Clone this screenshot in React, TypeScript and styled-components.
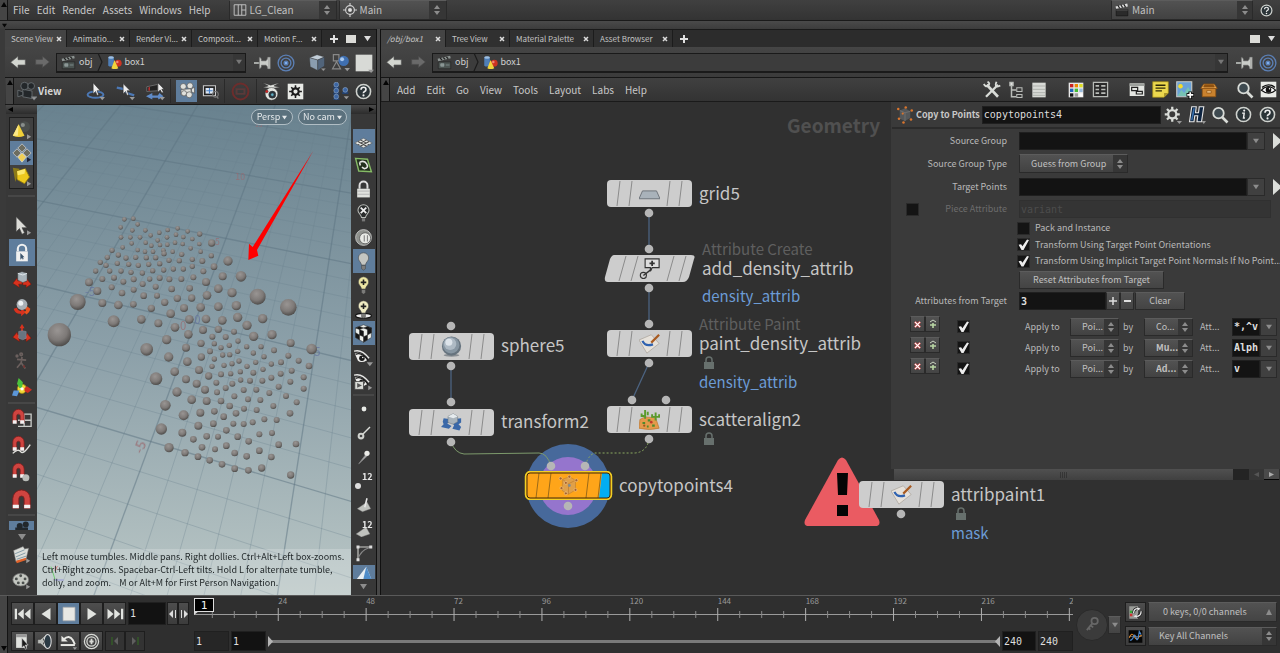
import React from "react";
import styled, { createGlobalStyle, css } from "styled-components";

const SANS = `"Noto Sans CJK SC", "Open Sans", sans-serif`;
const MONO = `"DejaVu Sans Mono", "Liberation Mono", monospace`;

const GlobalStyle = createGlobalStyle`
  *, *::before, *::after { box-sizing: border-box; }
  body { margin: 0; background: #2e2e2e; }
  #root { font-family: ${SANS}; font-size: 10px; line-height: 16px; color: #c4c4c4; }
  button, input, select { font: inherit; color: inherit; margin: 0; padding: 0; border: 0; border-radius: 0; background: none; }
  a { color: inherit; text-decoration: none; }
  svg { display: block; flex: none; }
`;

/* ---------- icons ---------- */

const metal = "#d9dcd8";
const moreTick = <path d="M18 17l5 3-5 3z" fill="#999" />;
const downTick = <path d="M17 19h7l-3.500 4z" fill="#999" />;
const magnet = (
  <g>
    <path d="M2 17V8a6.500 6.500 0 0 1 13 0v9h-4.500V9a2 2 0 0 0-4 0v8z" fill="#cf4440" stroke="#7e1d1b" strokeWidth=".8" />
    <path d="M2 14h4.500v4H2zM10.500 14H15v4h-4.500z" fill="#f2f2f2" />
  </g>
);
const eye = (
  <g>
    <path d="M1 7Q9 3 17 15Q9 20 5 16z" fill="#f0f0ee" />
    <path d="M0 4Q10 1 19 13" fill="none" stroke="#e8e8e6" strokeWidth="1.800" />
    <path d="M2 8Q10 4 18 16" fill="none" stroke="#1a1a1a" strokeWidth="1.600" />
    <circle cx="10" cy="13" r="3.500" fill="#1a1a1a" />
    <circle cx="11" cy="12" r="1" fill="#eee" />
  </g>
);
const redArrows = (
  <g fill="#d8321e" stroke="#7a1408" strokeWidth=".6">
    <path d="M1 16l5-6 1 3h5v4H8l1 4z" />
    <path d="M23 17l-5-6-1 3h-4v4h4v3z" />
  </g>
);
const bulb = (fill: string) => (
  <g>
    <path d="M12 1a6.500 6.500 0 0 0-6.500 6.500c0 4 3.500 5 4 9h5c.5-4 4-5 4-9A6.500 6.500 0 0 0 12 1z" fill={fill} stroke="#444" strokeWidth=".7" />
    <path d="M9.500 17h5v4l-2.500 2-2.500-2z" fill="#7c7c7a" stroke="#333" strokeWidth=".5" />
  </g>
);
const quad = <path d="M3 17L16 8l5 9-11 4z" fill="#bfc1bd" stroke="#777" strokeWidth=".5" />;

const icons: Record<string, React.ReactNode> = {
  layout: (
    <g fill="none" stroke="#c4c4c4" strokeWidth="1.600"><path d="M2 3h20v18H2zM9 3v18M15 3v18M15 12h7" /></g>
  ),
  target: (
    <g fill="none" stroke="#cfcfcf" strokeWidth="2"><circle cx="12" cy="12" r="7.500" /><path d="M12 0v5M12 19v5M0 12h5M19 12h5" /><circle cx="12" cy="12" r="2.500" fill="#eee" /></g>
  ),
  clapper: (
    <g><path d="M2 11h20v11H2z" fill="#4c5452" stroke="#222" /><path d="M1 6l20-5 1 4L2 10z" fill="#8d9492" /><path d="M5 5l3 3M10 4l3 3M15 3l3 3" stroke="#222" strokeWidth="2" /><path d="M6 14h5v4H6zM14 16h6" stroke="#9aa" fill="#8a9290" /></g>
  ),
  clapperDark: (
    <g><path d="M2 11h20v11H2z" fill="#2a2a2a" stroke="#111" /><path d="M2 12h20" stroke="#777" /><path d="M1 6l20-5 1 5L2 10z" fill="#ddd" /><path d="M5 4l3 5M10 3l3 5M15 2l3 5" stroke="#222" strokeWidth="2" /></g>
  ),
  shapes: (
    <g><path d="M2 4q4-3 9 0v13q-5 3-9 0z" fill="#4f7fb8" /><ellipse cx="6.500" cy="4" rx="4.500" ry="2" fill="#9fc0e2" /><circle cx="18" cy="13" r="5.500" fill="#cc3322" /><circle cx="16.500" cy="11" r="2" fill="#ee8877" /><path d="M12 8l6 13q-6 3-11 0z" fill="#f1d43c" /></g>
  ),
  back: (
    <g><path d="M1 11L12 2v5h11v8H12v5z" fill="#d3d6d0" stroke="#555" /></g>
  ),
  forward: <path d="M23 11L12 2v5H1v8h11v5z" fill="#6a6a6a" stroke="#4a4a4a" />,
  pin: (
    <g fill="#c9ccc8"><path d="M0 11h8v2H0z" /><path d="M7 4q4 2 3 5h6q2-1 2-5h4v16h-4q0-4-2-5h-6q1 3-3 5z" stroke="#555" strokeWidth=".8" /><path d="M20 4v16" stroke="#777" strokeWidth=".8" /></g>
  ),
  rings: (
    <g fill="none" stroke="#5b7fb4" strokeWidth="1.800"><circle cx="12" cy="12" r="10.500" /><circle cx="12" cy="12" r="6.500" /><circle cx="12" cy="12" r="2.500" fill="#7fb0ee" /></g>
  ),
  cube: (
    <g stroke="#333" strokeWidth=".5"><path d="M2 5l10-4 10 3-9 4z" fill="#c2ced8" /><path d="M2 5l11 3v14l-10-5z" fill="#8a9daf" /><path d="M13 8l9-4v12l-9 6z" fill="#51647a" />{downTick}</g>
  ),
  shapeSet: (
    <g><path d="M3 2h7v8H3zM2 20l5-9 5 9z" fill="none" stroke="#888" strokeWidth="1.500" /><circle cx="16" cy="10" r="6.500" fill="#3f6fb0" /><circle cx="14" cy="8" r="2.500" fill="#a8c8ee" />{downTick}</g>
  ),
  paper: (
    <g><path d="M2 2h20v20H2z" fill="#d8dad6" /><path d="M17 20h7l-3.500 4z" fill="#999" /></g>
  ),
  camera: (
    <g fill="#23272a" stroke="#6b7175"><path d="M7 10l11 2v9l-11-2z" /><circle cx="9" cy="6" r="4.500" /><circle cx="17" cy="6" r="4" /><path d="M1 11l6 2v4l-6 2z" />{downTick}</g>
  ),
  tumble: (
    <g><ellipse cx="12" cy="16" rx="10" ry="4" fill="none" stroke="#4c78b4" strokeWidth="2.500" /><path d="M9 1v14l3-3 2 5 2-1-2-5h4z" fill="#eee" stroke="#222" strokeWidth=".7" />{downTick}</g>
  ),
  pan: (
    <g><path d="M1 7l9 2 4 5 9 3" fill="none" stroke="#4c78b4" strokeWidth="3" /><path d="M9 2v13l3-3 2 5 2-1-2-5h4z" fill="#eee" stroke="#222" strokeWidth=".7" />{downTick}</g>
  ),
  dolly: (
    <g><path d="M1 6l14-3v8L1 12z" fill="#232323" stroke="#777" /><path d="M3 7l2-1v5H3z" fill="#b33" /><path d="M0 18l8-4v3h7l2-3 5 4-6 4-1-2H8v2z" fill="#5f8bc8" /><path d="M15 1v12l3-3 2 4 2-1-2-4h3z" fill="#eee" stroke="#222" strokeWidth=".7" />{downTick}</g>
  ),
  cameraMulti: (
    <g fill="#dfe0dc" stroke="#555" strokeWidth=".9"><circle cx="7" cy="6" r="4" /><circle cx="16" cy="5" r="4" /><path d="M4 10l13-1 1 7-14 1z" /><circle cx="8" cy="15" r="3.500" /><circle cx="15" cy="17" r="4" /><path d="M18 9l4-2v8l-4-2z" /></g>
  ),
  frame: (
    <g><path d="M2 4h17v14H2z" fill="#222" stroke="#ccc" strokeWidth="1.500" /><path d="M5 7h11v8H5z" fill="#dfe8f4" /><path d="M6 11h9M10.500 7v8" stroke="#4a82c8" strokeWidth="1.500" /><circle cx="19" cy="16" r="4" fill="none" stroke="#777" strokeWidth="1.500" /><path d="M21 19l2 3" stroke="#777" strokeWidth="2" /></g>
  ),
  stop: (
    <g fill="none" stroke="#6d2d2c" strokeWidth="2.500"><circle cx="12" cy="12" r="10" /><path d="M7 9h10v6H7z" stroke="#5a3a3a" /></g>
  ),
  copter: (
    <g stroke="#333" strokeWidth=".6"><path d="M1 1l10 3 11-3-7 4 8 2-11 1-11-1 7-2z" fill="#e2e4e0" /><circle cx="12" cy="15" r="8" fill="#e4e6e2" /><circle cx="13" cy="16" r="4.500" fill="#28333c" /><circle cx="13" cy="16" r="2" fill="#5fb0c8" /><circle cx="6" cy="12" r="1.800" fill="#d22" /></g>
  ),
  gearBox: (
    <g><path d="M1 1h22v22H1z" fill="#e8eae6" /><circle cx="12" cy="12" r="4.500" fill="none" stroke="#1c1c1c" strokeWidth="3" /><path d="M12 3v4M12 17v4M3 12h4M17 12h4M6 6l3 3M15 15l3 3M18 6l-3 3M9 15l-3 3" stroke="#1c1c1c" strokeWidth="2.200" /></g>
  ),
  nodesBlue: (
    <g fill="#3c66a4" stroke="#9cb8dd" strokeWidth=".7"><path d="M3 6h8v3H3zM3 14h8v3H3zM3 22h8v2H3zM15 13h8v3h-8z" stroke="none" fill="#23406e" /><circle cx="7" cy="3.500" r="3.200" /><circle cx="7" cy="11.500" r="3.200" /><circle cx="7" cy="19.500" r="3.200" /><circle cx="19" cy="10.500" r="3.200" /><path d="M17 19h7l-3.500 4z" fill="#999" stroke="none" /></g>
  ),
  help: (
    <g><circle cx="12" cy="12" r="10" fill="#2b3438" stroke="#cfd2ce" strokeWidth="2.200" /><path d="M8.500 9.500q0-3.500 3.500-3.500t3.500 3q0 2-2 3t-1.500 2.500" fill="none" stroke="#eee" strokeWidth="2.300" /><circle cx="12" cy="17.500" r="1.500" fill="#eee" /></g>
  ),
  info: (
    <g><circle cx="12" cy="12" r="10" fill="#2b3438" stroke="#cfd2ce" strokeWidth="2.200" /><path d="M10 10h3l-1 7h2" fill="none" stroke="#eee" strokeWidth="2" /><circle cx="13" cy="6.500" r="1.500" fill="#eee" /></g>
  ),
  wrench: (
    <g fill="none" stroke={metal} strokeWidth="3"><path d="M5 5l15 16" strokeWidth="3.500" /><path d="M20 5L4 21" /><path d="M1 4q3 5 6 2t-1-5M18 1q-2 5 0 6t5-1" strokeWidth="2.500" /></g>
  ),
  tree: (
    <g fill="none" stroke="#b9bcb8" strokeWidth="2"><path d="M6 4v17h6M6 12h6" /><path d="M13 9h7v5h-7zM13 18h7v4h-7z" strokeWidth="1.400" /><path d="M4 2h4v4H4z" fill="#eee" /></g>
  ),
  list: (
    <g><path d="M2 1h20v22H2z" fill="#d8dad6" /><path d="M2 6h20M2 11h20M2 16h20M2 20h20" stroke="#9b9e9a" /></g>
  ),
  palette: (
    <g><path d="M1 1h22v22H1z" fill="#e8e8e8" /><path d="M3 3h5v5H3z" fill="#c22" /><path d="M10 3h5v5h-5z" fill="#e80" /><path d="M17 3h5v5h-5z" fill="#dd2" /><path d="M3 10h5v5H3z" fill="#26b" /><path d="M10 10h5v5h-5z" fill="#4b3" /><path d="M17 10h5v5h-5z" fill="#9bd" /><path d="M3 17h5v5H3z" fill="#111" /><path d="M10 17h5v5h-5z" fill="#999" /><path d="M17 17h5v5h-5z" fill="#fff" /></g>
  ),
  tableGrid: (
    <g><path d="M2 2h20v20H2z" fill="#2a2a2a" stroke="#b9bcb8" strokeWidth="1.800" /><path d="M5 7h5M5 12h5M5 17h5M13 7h6M13 12h6M13 17h6" stroke="#b9bcb8" strokeWidth="2.400" /></g>
  ),
  windows: (
    <g><path d="M1 2h22v19H1z" fill="#e4e6e2" /><path d="M1 2h22v4H1z" fill="#9da09c" /><path d="M4 8h9v5H4zM11 14h9v4h-9z" fill="#e4e6e2" stroke="#222" strokeWidth="1.800" /></g>
  ),
  note: (
    <g><path d="M1 1h22v16l-6 6H1z" fill="#ecd84e" stroke="#a08a18" /><path d="M17 23v-6h6z" fill="#a8942a" /><path d="M5 6h14M5 10h14M5 14h9" stroke="#2c2808" strokeWidth="1.800" /></g>
  ),
  picture: (
    <g><path d="M1 1h20v20H1z" fill="#6aa2d8" stroke="#c8ccc8" strokeWidth="1.500" /><circle cx="6" cy="7" r="3" fill="#f4dc2c" /><path d="M2 20l5-8 4 4 5-8 4 6v6z" fill="#76c2b4" /><path d="M14 18.500h10M19 14v10" stroke="#111" strokeWidth="5" /><path d="M15 18.500h8M19 15v8" stroke="#fff" strokeWidth="2.200" /></g>
  ),
  crate: (
    <g stroke="#8d5212"><path d="M3 10h18v11H3z" fill="#c9822e" /><path d="M5 4h14l4 6H1z" fill="#e2a04c" /><path d="M6 5h12l1 3H5z" fill="#8d5212" /><path d="M9 13h6v3H9z" fill="#f2ca90" /></g>
  ),
  search: (
    <g><path d="M15 15l7 7" stroke={metal} strokeWidth="3.500" /><circle cx="10" cy="9.500" r="7" fill="#3e4a50" stroke={metal} strokeWidth="2.400" /></g>
  ),
  eyeBox: (
    <g><path d="M1 1h22v22H1z" fill="#e8eae6" /><path d="M2 13q10-10 20 0-10 8-20 0z" fill="#fff" stroke="#111" strokeWidth="1.600" /><circle cx="12" cy="12.500" r="4" fill="#111" /><circle cx="13.500" cy="11" r="1" fill="#fff" /><path d="M3 9q9-7 18 0" fill="none" stroke="#111" strokeWidth="1.800" /></g>
  ),
  gear: (
    <g fill="none" stroke={metal}><circle cx="11" cy="11" r="5.500" strokeWidth="3" /><path d="M11 1v4M11 17v4M1 11h4M17 11h4M4 4l3 3M15 15l3 3M18 4l-3 3M7 15l-3 3" strokeWidth="3" /><path d="M17 20h7l-3.500 4z" fill="#999" stroke="none" /></g>
  ),
  hda: (
    <g><path d="M5 1h6l-1 8h4l1-8h6l-3 20h-6l1-8H9l-1 8H2z" fill="#0e2440" stroke="#e6e6e6" strokeWidth="1.500" /><path d="M7 3h2l-1 7-2 9H4z" fill="#3a72b0" /><path d="M18 20h6l-3 4z" fill="#999" /></g>
  ),
  copyPoints: (
    <g><path d="M5 6l7-3 7 4v9l-7 4-7-3z" fill="#55585a" /><path d="M5 6l7 3 7-2M12 9v11" stroke="#777" fill="none" /><g fill="#d9752e"><circle cx="3" cy="4" r="1.700" /><circle cx="13" cy="2" r="1.700" /><circle cx="21" cy="6" r="1.700" /><circle cx="4" cy="17" r="1.700" /><circle cx="10" cy="22" r="1.700" /><circle cx="20" cy="18" r="1.700" /><circle cx="9" cy="10" r="1.500" /></g></g>
  ),
  copyPointsLit: (
    <g><path d="M5 5l8-3 7 4v11l-8 5-7-4z" fill="#e0a04a" stroke="#b87a2c" strokeWidth=".6" /><path d="M5 5l7 5 8-4M12 10v12" stroke="#c58436" fill="none" /><g fill="#a8622a" stroke="#f0c890" strokeWidth=".7"><circle cx="3" cy="4" r="1.700" /><circle cx="13" cy="2" r="1.700" /><circle cx="21" cy="6" r="1.700" /><circle cx="4" cy="15" r="1.700" /><circle cx="9" cy="21" r="1.700" /><circle cx="20" cy="17" r="1.700" /><circle cx="9" cy="9" r="1.700" /></g><circle cx="13" cy="12" r="1.600" fill="#7c8c98" /></g>
  ),
  coneSphere: (
    <g><circle cx="15" cy="8" r="6.500" fill="#4a4e4c" /><circle cx="13" cy="6" r="2.500" fill="#888d8b" /><path d="M8 5l7 14q-7 3-14 0z" fill="#f0cf38" /><path d="M8 5l-1 14q-4 0-6 0z" fill="#fbe888" />{moreTick}</g>
  ),
  quadSelect: (
    <g stroke="#ddd" strokeWidth=".8"><path d="M12 1l5 5-5 5-5-5zM6 7l5 5-5 5-5-5zM18 7l5 5-5 5-5-5z" fill="#6d6d60" /><path d="M12 12l5 5-5 6-5-6z" fill="#f0cf58" /><path d="M18 17l5 3-5 3z" fill="#223" stroke="none" /></g>
  ),
  yellowBox: (
    <g><path d="M1 1l8 1-5 16z" fill="#8b7a18" /><path d="M6 5l10-3 5 10-6 8-9-5z" fill="#ecc91e" stroke="#8f760c" /><path d="M6 5l10-3-1 6-8 2z" fill="#fae86c" />{moreTick}</g>
  ),
  arrow: (
    <g><path d="M5 1v18l4-4 3 7 3-2-3-6h6z" fill="#dcdcd8" stroke="#444" strokeWidth=".7" />{moreTick}</g>
  ),
  lockSelect: (
    <g><path d="M7 10V7a5 5 0 0 1 10 0v3" fill="none" stroke="#f0f0f0" strokeWidth="2.500" /><path d="M5 10h14v12H5z" fill="#f0f0f0" /><path d="M10 12v8l2-2 1 2 1-1-1-2h2z" fill="#3d566e" /></g>
  ),
  lock: (
    <g><path d="M7 11V7a5 5 0 0 1 10 0v4" fill="none" stroke="#ddd" strokeWidth="2.500" /><path d="M4 11h16v11H4z" fill="#e0e2de" /><path d="M4 14h16M4 18h16" stroke="#aaa" /></g>
  ),
  move: (
    <g>{redArrows}<path d="M7 4l5-2 6 2v9l-5 2-6-3z" fill="#a9b4bb" stroke="#555" strokeWidth=".5" /><path d="M7 4l6 2 5-2" fill="none" stroke="#e8eef2" /></g>
  ),
  rotate: (
    <g><path d="M2 14q2 7 9 6v3l6-5-6-4v3q-4 0-5-4z" fill="#d8321e" /><path d="M22 14l-4-3-3 4h2q0 2-2 3l2 3q4-2 5-7z" fill="#e8501e" /><circle cx="12" cy="9" r="6.500" fill="#a8b0b6" /><circle cx="10.500" cy="7.500" r="3" fill="#eef2f4" /></g>
  ),
  scale: (
    <g>{redArrows}<path d="M12 0l3 5h-2v6h-2V5H9z" fill="#d8321e" /><path d="M8 9l4-1 5 1v8l-4 2-5-2z" fill="#687480" stroke="#99a" strokeWidth=".5" /></g>
  ),
  pose: (
    <g fill="none" stroke="#6b605e" strokeWidth="2"><circle cx="11" cy="4" r="1.500" /><circle cx="6" cy="6" r="1" /><path d="M12 7l-1 7 5 7M11 14l-5 6M6 10l11 1" /><path d="M14 17l1 3" stroke="#743330" /></g>
  ),
  handles: (
    <g><circle cx="12" cy="13" r="5.500" fill="#f2d838" stroke="#a08a10" /><path d="M8 0l5 5-1 7h-3l-3-5z" fill="#4cc23c" /><path d="M15 12l3-2 6 4-5 4-4-2z" fill="#cc2e22" /><path d="M9 15l-3 7-6-1 2-6z" fill="#5b96d8" /><circle cx="12" cy="13" r="2" fill="#fff" /></g>
  ),
  magnetGrid: <g><path d="M9 7h14v14H8M8 14h15M15 7v14" fill="none" stroke="#c8cbc8" strokeWidth="1.500" />{magnet}</g>,
  magnetCurve: <g><path d="M2 21q6-6 9-2t11-8" fill="none" stroke="#e0e0dc" strokeWidth="1.600" />{magnet}</g>,
  magnetPoint: <g>{magnet}<circle cx="17" cy="18" r="4" fill="#b9bcb8" /></g>,
  magnet: (
    <g><path d="M2 22V11a10 10 0 0 1 20 0v11h-7V11a3 3 0 0 0-6 0v11z" fill="#cf4440" stroke="#7e1d1b" /><path d="M2 18h7v4H2zM15 18h7v4h-7z" fill="#f2f2f2" /></g>
  ),
  cameraTop: <g fill="#22272b"><circle cx="9" cy="12" r="4" /><circle cx="17" cy="10" r="4" /><path d="M3 14h17v10H3z" /></g>,
  films: (
    <g><path d="M2 7l12-5 2 3 5-1-3 13-13 4z" fill="#dcdeda" stroke="#777" strokeWidth=".6" /><path d="M4 11l12-5M5 15l12-5M6 18l12-4" stroke="#6d8a9a" /><path d="M5 20l13-4v3L6 23z" fill="#e0622a" />{moreTick}</g>
  ),
  reel: (
    <g><ellipse cx="11" cy="11" rx="10" ry="8" fill="#c4c7c1" stroke="#777" /><g fill="#4c504e"><circle cx="11" cy="6" r="1.800" /><circle cx="5.500" cy="10" r="1.800" /><circle cx="16.500" cy="10" r="1.800" /><circle cx="8" cy="15" r="1.800" /><circle cx="14" cy="15" r="1.800" /></g>{moreTick}</g>
  ),
  gridPlane: (
    <g><path d="M1 14l11-6 11 6-11 6z" fill="#e4e6e2" stroke="#444" strokeWidth=".6" /><path d="M5 12l11 6M8 10l11 6M5 16l11-6M8 18l11-6" stroke="#444" strokeWidth="1.300" /></g>
  ),
  construction: (
    <g><path d="M2 3l15 1 5 16-16-1z" fill="#23301e" stroke="#86bb66" strokeWidth="1.800" /><path d="M7 8q6-3 9 2t-3 6l-3-2M7 8l1 4" fill="none" stroke="#e4e6e2" strokeWidth="2" /></g>
  ),
  bulbOff: (
    <g><path d="M12 1a7 7 0 0 0-7 7c0 4 4 5 4.500 9h5c.5-4 4.500-5 4.500-9a7 7 0 0 0-7-7z" fill="#2a2c2c" stroke="#b9bcb8" strokeWidth="1.300" /><path d="M8.500 4.500l7 7M15.500 4.500l-7 7" stroke="#eee" strokeWidth="2.200" /><path d="M10 18h4v4h-4z" fill="#777" /></g>
  ),
  headlight: (
    <g><circle cx="12" cy="12" r="10" fill="#8f928e" stroke="#ccc" /><circle cx="14" cy="13" r="7" fill="#e8eae6" stroke="#555" /><path d="M13 9v8M17 9v8" stroke="#888" strokeWidth="1.500" /></g>
  ),
  bulbGrey: bulb("#c4c6c2"),
  bulbPlus: <g>{bulb("#ece6a4")}<path d="M8.500 8h7M12 4.500v7" stroke="#222" strokeWidth="2" /></g>,
  bulbShadow: <g><ellipse cx="12" cy="20" rx="10" ry="3" fill="#eee" stroke="#111" strokeWidth="1.500" />{bulb("#f0ecc4")}<path d="M8.500 8h7M12 4.500v7" stroke="#222" strokeWidth="2" /></g>,
  checkerCube: (
    <g stroke="#222" strokeWidth=".6"><path d="M2 5l10-4 10 4v12l-10 6-10-6z" fill="#eceeea" /><path d="M7 3l5 2-5 2-5-2zM17 3l5 2-5 2-5-2zM7 7l5 2v7l-5-2zM2 11l5 3v6l-5-3zM17 7l5-2v6l-5 3zM12 16l5-2v6l-5 3z" fill="#151515" /></g>
  ),
  eyeTick: <g>{eye}<path d="M16 18h8l-4 5z" fill="#999" /></g>,
  eyePlay: <g>{eye}<path d="M1 12h11v10H1z" fill="#dadcd8" stroke="#444" /><path d="M4 14l6 3-6 3z" fill="#555" />{moreTick}</g>,
  dot: <circle cx="12" cy="12" r="3.200" fill="#e8eae6" />,
  dotLine: <g><path d="M9 15L20 4" stroke="#dcdeda" strokeWidth="2" /><circle cx="8" cy="16" r="4.500" fill="#d0d2ce" /><circle cx="8" cy="16" r="1.800" fill="#444" /></g>,
  normal: <g><path d="M5 21L14 9l2 2z" fill="#aaa" stroke="#888" /><circle cx="16" cy="7" r="3.500" fill="#ecece8" /></g>,
  primNormal: <g>{quad}<path d="M13 15l3-12" stroke="#e8e8e8" strokeWidth="2" /></g>,
  hull: <g fill="none" stroke="#cfcfcb" strokeWidth="1.500"><path d="M4 21V4h17" /><path d="M4 21Q6 9 21 4" stroke="#888" /><path d="M2 2h4v4H2zM19 2h4v4h-4zM2 19h4v4H2z" fill="#ddd" stroke="none" /></g>,
  facet: <g><path d="M2 22L15 5l7 17z" fill="#e8eef2" /><path d="M15 5l7 17H11z" fill="#4f8cc8" /></g>,
  paintNode: (
    <g><path d="M0 8l14-6 9 10-14 11z" fill="#e6e1da" stroke="#a8a09a" strokeWidth=".8" /><path d="M4 9q3 7 12 4" fill="none" stroke="#2f62b0" strokeWidth="2.600" /><path d="M14 11l9-9" stroke="#a85a20" strokeWidth="2.500" /></g>
  ),
  gridNode: <path d="M4 9h16l4 9H0z" fill="#a9b2ba" stroke="#666c72" strokeWidth="1" />,
  sphereNode: (
    <g><ellipse cx="12" cy="22" rx="9" ry="1.800" fill="#8a8f94" /><circle cx="12" cy="11.500" r="11" fill="#66737e" /><circle cx="11.500" cy="10.500" r="9.500" fill="#8796a2" /><circle cx="10.500" cy="9" r="7" fill="#aebac4" /><circle cx="9" cy="7" r="4" fill="#dde4ea" /></g>
  ),
  transformNode: (
    <g><path d="M3 7l6 1 2 3-4 2 5 3-3 3-9-2 3-3-1-3zM15 8l8-1v5l-3 2 3 3-2 4-8-2 2-4-2-2 4-2z" fill="#3a68a8" /><path d="M8 5l6-3 5 3v6l-5 3-6-2z" fill="#aab4bc" stroke="#6c767e" strokeWidth=".6" /><path d="M8 5l6 2 5-2-5-3z" fill="#e6ebee" /></g>
  ),
  attribNode: (
    <g fill="none" stroke="#333" strokeWidth="1.300"><path d="M7 1h16v10h-8l-2 4v-4H7z" fill="#ddd" /><path d="M15 3v6M12 6h6" strokeWidth="2" /><circle cx="5" cy="20" r="3.500" /><path d="M5 20L14 13" strokeWidth="1.600" /></g>
  ),
  scatterNode: (
    <g><path d="M1 12l6-3 12 1 4 12q-11 3-23 0z" fill="#e39a4a" stroke="#b87026" strokeWidth=".7" /><path d="M7 11V1M3 5v3h4M19 13V4M15 6v3h8V6M10 7V3" stroke="#5a9a2c" strokeWidth="2.200" fill="none" /><path d="M10 13h3M4 16h3M15 19h3M9 20h2" stroke="#4e8a2c" strokeWidth="2.400" /><circle cx="14" cy="15" r="1.500" fill="#c0392b" /><circle cx="6" cy="19" r="1.300" fill="#9a5a20" /></g>
  ),
  key: (
    <g fill="none" stroke="#676767" strokeWidth="2.500"><circle cx="15" cy="7" r="4.500" /><path d="M12 10L4 20M9 13l4 3M6 17l3 2" /></g>
  ),
  toStart: <g fill="#e2e4e0"><path d="M1 5h3v14H1zM13 5v14L5 12zM22 5v14l-8-7z" /></g>,
  toEnd: <g fill="#e2e4e0"><path d="M20 5h3v14h-3zM11 5v14l8-7zM2 5v14l8-7z" /></g>,
  playBack: <path d="M18 4v16L6 12z" fill="#e2e4e0" />,
  play: <path d="M6 4v16l12-8z" fill="#e2e4e0" />,
  stopPlay: <path d="M4 3h16v18H4z" fill="#e8e8e4" stroke="#aaa" />,
  menuPage: <g><path d="M3 2h15v19H3z" fill="#e0e2de" /><path d="M3 2h15v4H3z" fill="#999" /><path d="M11 7v14l3-3 2 5 2-1-2-5h4z" fill="#1c1c1c" stroke="#ddd" strokeWidth=".8" /></g>,
  speaker: <g><path d="M1 9h4l8-7q-3 10 0 20l-8-7H1z" fill="#b9bcb8" stroke="#222" strokeWidth=".6" /><ellipse cx="15" cy="12" rx="5" ry="10" fill="#2b3a44" stroke="#ddd" strokeWidth="1.500" /><path d="M9 8q3 4 0 8" fill="none" stroke="#222" strokeWidth="1.200" /></g>,
  loop: <g fill="none" stroke="#e8e8e4" strokeWidth="2.800"><path d="M5 9q8-7 13 1l3 6" /><path d="M1 17h20" /><path d="M2 4v8h9z" fill="#e8e8e4" stroke="none" /><path d="M18 20h6l-3 4z" fill="#999" stroke="none" /></g>,
  clock: <g fill="none" stroke="#d8dad6" strokeWidth="1.800"><circle cx="12" cy="12" r="10" /><circle cx="12" cy="12" r="6.500" /><path d="M12 8v8M9 12h6" strokeWidth="2.500" /></g>,
  channelList: <g><path d="M2 2h14v20H2z" fill="#9a9c98" /><path d="M3 9h4v4H3z" fill="#3a3" /><path d="M3 14h4v4H3z" fill="#c33" /><path d="M9 13q0-8 8-7M21 10q0 9-9 8" fill="none" stroke="#111" strokeWidth="4.500" /><path d="M9 13q0-8 8-7M21 10q0 9-9 8" fill="none" stroke="#e8e8e8" strokeWidth="2.200" /><path d="M15 3l5 3-5 3zM14 15l-5 3 5 3z" fill="#e8e8e8" /></g>,
  curves: <g><path d="M1 2h22v20H1z" fill="#060606" /><path d="M2 12h20" stroke="#888" /><path d="M2 14q4-10 8-2t8 0l4-2" fill="none" stroke="#e08a2c" strokeWidth="1.800" /><path d="M3 18q4 0 6-6t5 5q2 2 4-13l3 5" fill="none" stroke="#4b8ad0" strokeWidth="1.800" /></g>,
};

const Icon = ({ name, size = 18 }: { name: string; size?: number }) => (
  <svg width={size} height={size} viewBox="0 0 24 24" aria-hidden="true">{icons[name]}</svg>
);

const Spin = () => (
  <svg width="8" height="12" viewBox="0 0 8 12" aria-hidden="true"><path d="M4 1l3 4H1zM4 11l3-4H1z" fill="#8c8c8c" /></svg>
);
const Caret = ({ fill = "#8c8c8c", size = 8 }: { fill?: string; size?: number }) => (
  <svg width={size} height={size} viewBox="0 0 8 8" aria-hidden="true"><path d="M0 1h8L4 7z" fill={fill} /></svg>
);

/* ---------- shared parts ---------- */

const Shell = styled.div`
  height: 100vh; display: flex; flex-direction: column; background: #3a3a3a; overflow: hidden;
`;
const Bar = styled.div<{ $h: number }>`
  flex: none; height: ${p => p.$h}px; display: flex; align-items: center;
  background: linear-gradient(#404040, #333); border-bottom: 1px solid #1a1a1a;
`;
const Spacer = styled.div`flex: 1;`;
const Gap = styled.div<{ $w: number }>`flex: none; width: ${p => p.$w}px;`;

const Handle = styled.button<{ $end?: boolean }>`
  flex: none; width: 8px; align-self: stretch; display: flex; justify-content: center;
  align-items: ${p => (p.$end ? "flex-end" : "flex-start")};
  padding: 2px 0; background: #454545; border-right: 1px solid #141414;
`;
const Grip = ({ label, end }: { label: string; end?: boolean }) => (
  <Handle aria-label={label} $end={end}>
    <svg width="6" height="6" viewBox="0 0 6 6" aria-hidden="true"><path d={end ? "M0 1h6L3 6z" : "M0 5h6L3 0z"} fill="#050505" /></svg>
  </Handle>
);

const MenuNav = styled.nav<{ $gap: number }>`
  display: flex; gap: ${p => p.$gap}px; font-size: 10px; color: #c8c8c8;
`;
const MenuItem = styled.button`white-space: nowrap;`;

const ComboBox = styled.label<{ $w: number; $h: number }>`
  flex: none; width: ${p => p.$w}px; height: ${p => p.$h}px; display: flex; align-items: center;
  background: linear-gradient(#525252, #424242); border: 1px solid #2a2a2a; border-top-color: #5c5c5c;
`;
const ComboSelect = styled.select<{ $pad: number; $bold?: boolean; $size: number }>`
  appearance: none; flex: 1; min-width: 0; height: 100%; padding-left: ${p => p.$pad}px;
  font-size: ${p => p.$size}px; font-weight: ${p => (p.$bold ? 700 : 400)}; color: #c0c0c0;
`;
const ComboEnd = styled.span<{ $w: number }>`
  width: ${p => p.$w}px; align-self: stretch; display: flex; align-items: center; justify-content: center; background: #363636;
`;
type ComboProps = { label: string; value: string; w: number; h: number; pad: number; icon?: string; bold?: boolean; end?: number; size?: number };
const Combo = ({ label, value, w, h, pad, icon, bold, end = 14, size = 9 }: ComboProps) => (
  <ComboBox $w={w} $h={h}>
    {icon && <><Gap $w={3} /><Icon name={icon} size={14} /></>}
    <ComboSelect $pad={pad} $bold={bold} $size={size} aria-label={label}><option>{value}</option></ComboSelect>
    <ComboEnd $w={end}><Spin /></ComboEnd>
  </ComboBox>
);

const IconButton = styled.button<{ $w?: number; $h?: number; $on?: boolean }>`
  flex: none; width: ${p => p.$w ?? 24}px; height: ${p => p.$h ?? 22}px;
  display: flex; align-items: center; justify-content: center; overflow: hidden;
  ${p => p.$on && css`background: #5f7d9c;`}
`;
const Tool = ({ icon, label, w, h, size, on }: { icon: string; label: string; w?: number; h?: number; size?: number; on?: boolean }) => (
  <IconButton $w={w} $h={h} $on={on} aria-label={label}><Icon name={icon} size={size} /></IconButton>
);
const Divider = styled.div<{ $vertical?: boolean }>`
  flex: none; background: #2a2a2a;
  ${p => (p.$vertical ? "width: 1px; height: 24px;" : "height: 2px; align-self: stretch; margin: 1px 2px; background: #474747;")}
`;

/* ---------- tabs and path bars ---------- */

const TabStrip = styled.div`
  flex: none; height: 18px; display: flex; background: #2c2c2c; border-top: 1px solid #1a1a1a;
`;
const TabItem = styled.div<{ $w: number; $active?: boolean }>`
  flex: none; width: ${p => p.$w}px; display: flex; align-items: center; justify-content: space-between; padding: 0 4px 0 6px;
  background: ${p => (p.$active ? "#444" : "#303030")}; border-right: 1px solid #1c1c1c; font-size: 8px;
`;
const TabName = styled.button<{ $italic?: boolean }>`
  min-width: 0; white-space: nowrap; font-style: ${p => (p.$italic ? "italic" : "normal")};
`;
const TabExtra = styled.button`
  width: 17px; display: flex; align-items: center; justify-content: center;
`;
const CloseMark = () => (
  <svg width="6" height="6" viewBox="0 0 6 6" aria-hidden="true"><path d="M1 1l4 4M5 1L1 5" stroke="#ddd" strokeWidth="1.500" /></svg>
);
const PlusMark = () => (
  <svg width="10" height="10" viewBox="0 0 10 10" aria-hidden="true"><path d="M5 1v8M1 5h8" stroke="#e0e0e0" strokeWidth="2" /></svg>
);
const Pane = () => (
  <svg width="10" height="8" viewBox="0 0 10 8" aria-hidden="true"><path d="M0 0h10v8H0z" fill="#dcdcd8" /></svg>
);
const Tab = ({ name, w, active, italic }: { name: string; w: number; active?: boolean; italic?: boolean }) => (
  <TabItem $w={w} $active={active}>
    <TabName $italic={italic}>{name}</TabName>
    <button aria-label={`Close ${name}`}><CloseMark /></button>
  </TabItem>
);

const PathBar = styled.div`
  flex: none; height: 31px; display: flex; align-items: center; padding-top: 1px; background: linear-gradient(#454545, #3b3b3b);
  border-bottom: 1px solid #161616;
`;
const PathField = styled.div`
  flex: 1; min-width: 0; height: 20px; display: flex; align-items: center; padding-left: 4px; font-size: 9px;
  border: 1px solid #1a1a1a; border-bottom-width: 2px; background: #3c3c3c; color: #d0d0d0;
`;
const Crumb = styled.a`display: flex; align-items: center; gap: 3px;`;
const PathMenu = styled.button`
  width: 12px; align-self: stretch; display: flex; align-items: center; justify-content: center; background: #363636;
`;
const Path = ({ children }: { children?: React.ReactNode }) => (
  <PathBar>
    <Gap $w={3} />
    <Tool icon="back" label="Back" w={20} h={24} size={16} />
    <Gap $w={4} />
    <Tool icon="forward" label="Forward" w={20} h={24} size={15} />
    <Gap $w={4} />
    <PathField>
      <Crumb href="#obj"><Icon name="clapper" size={15} />obj</Crumb>
      <svg width="14" height="18" viewBox="0 0 14 18" aria-hidden="true"><path d="M5 0l4 9-4 9" fill="none" stroke="#1c1c1c" strokeWidth="1.200" /></svg>
      <Crumb href="#box1"><Icon name="shapes" size={15} />box1</Crumb>
      <Spacer />
      <PathMenu aria-label="Path history"><Caret size={6} fill="#777" /></PathMenu>
    </PathField>
    <Gap $w={6} />
    <Tool icon="pin" label="Pin pane" w={22} size={18} />
    <Tool icon="rings" label="Link pane" w={24} size={18} />
    {children}
  </PathBar>
);

/* ---------- 3D viewport ---------- */

const dotData =
  "373,358,7 400,356,7 413,373,7 362,382,7 397,391,7 436,391,7 478,398,7 503,390,7 533,385,7 563,394,7 599,402,8 452,406,7 363,412,7 391,412,7 420,412,7 473,421,7 501,412,7 528,404,7 550,411,7 577,417,7 635,429,11 395,430,7 437,428,7 454,437,7 480,435,7 502,434,7 525,428,7 548,432,7 598,432,7 368,442,7 336,451,8 413,450,7 435,455,7 459,455,7 490,451,7 518,455,7 545,463,8 572,445,7 602,455,7 634,467,8 684,483,14 322,472,8 355,465,8 378,474,8 407,472,8 439,473,8 467,473,8 492,461,8 507,481,8 538,482,8 577,478,8 607,483,9 642,500,10 301,487,8 318,496,8 352,490,8 386,493,8 415,496,8 446,493,8 479,491,8 287,513,8 329,513,8 363,513,8 393,517,8 427,519,8 458,512,8 491,510,8 520,507,8 550,507,8 577,499,8 610,514,9 668,529,12 723,529,16 267,547,12 307,537,9 342,533,9 370,545,9 401,538,9 428,552,9 449,537,8 479,534,9 508,538,9 544,537,9 580,532,9 618,546,12 292,573,12 335,562,9 366,579,10 401,569,9 431,587,10 467,560,9 471,587,9 515,567,10 569,565,10 532,595,11 575,594,11 621,586,13 655,566,13 696,578,14 773,590,24 233,606,24 865,622,25 307,609,12 355,615,13 400,613,10 454,625,11 494,607,11 512,641,13 552,624,12 602,622,13 655,620,13 709,617,14 178,704,35 341,664,18 424,658,13 475,670,12 525,682,13 568,658,13 618,657,13 667,661,13 713,652,14 788,656,14 741,676,14 500,719,14 565,703,13 609,690,12 655,688,11 702,695,9 761,709,14 816,704,14 440,748,19 558,743,12 603,730,11 637,710,9 677,711,9 714,723,8 872,729,12 935,747,16 643,731,8 688,736,8 740,740,8 783,740,8 663,743,8 822,751,9 630,754,9 713,754,8 760,759,8 689,764,8 865,767,9 506,771,14 668,765,8 792,770,8 562,785,13 604,771,11 " +
  "597,810,12 524,815,13 468,836,19 558,838,12 626,828,11 590,851,12 615,869,12 531,876,14 575,899,13 496,916,16 551,946,15 484,987,17 507,1043,14 547,998,12 555,1058,11 580,1018,10 594,1070,10 595,977,12 601,938,12 620,903,12 606,1042,10 629,1081,10 620,1009,10 654,1010,9 640,971,10 643,934,10 671,950,10 679,991,10 645,1048,9 666,1093,10 679,1037,10 704,1106,10 704,1059,10 745,1111,10 740,1069,10 785,1104,11 778,1052,10 814,1071,10 872,1125,11 836,1034,10 888,1032,10 816,999,9 778,1003,9 746,1024,10 713,1010,10 700,971,9 731,972,9 758,967,9 793,958,9 830,960,9 870,940,10 890,907,9 858,888,9 820,918,9 808,879,9 836,860,9 871,845,9 911,866,9 911,832,9 927,798,10 875,812,9 896,782,9 843,787,9 842,821,9 814,833,9 814,792,8 789,808,8 787,842,9 769,869,9 781,900,9 770,930,9 744,898,9 731,870,9 732,926,9 708,940,10 703,889,9 689,918,10 663,903,10 651,877,9 677,864,9 649,848,9 697,851,9 722,840,8 750,842,9 692,821,8 663,823,9 721,815,8 760,818,9 636,799,8 672,796,8 696,791,8 717,783,8 741,799,8 767,787,8 643,777,8";
const dots = dotData.split(" ").map(s => s.split(",").map(Number));

/* ground-plane units to drawing units */
const project = (u: number, v: number) => {
  const w = 1 + 0.0341 * u - 0.01 * v;
  return [Math.round((584 + 41.8 * u + 62.75 * v) / w), Math.round((668 - 36.4 * u + 9.85 * v) / w)];
};
const gridLines: { d: string; major: boolean }[] = [];
for (let u = -14; u <= 26; u++) {
  gridLines.push({ d: `M${project(u, -20).join(" ")}L${project(u, 16).join(" ")}`, major: u % 5 === 0 });
}
for (let v = -20; v <= 16; v++) {
  gridLines.push({ d: `M${project(-14, v).join(" ")}L${project(50, v).join(" ")}`, major: v % 5 === 0 });
}

const Scene = () => (
  <svg width="100%" height="100%" viewBox="111 15 942 1470" preserveAspectRatio="xMinYMin slice" role="img" aria-label="Perspective view of scattered spheres">
    <defs>
      <linearGradient id="sky" gradientUnits="userSpaceOnUse" x1="0" y1="15" x2="0" y2="1485">
        <stop offset="0" stopColor="#69828f" /><stop offset=".5" stopColor="#8ca0a9" /><stop offset="1" stopColor="#b9c6c5" />
      </linearGradient>
      <radialGradient id="ball" cx=".42" cy=".32" r=".7">
        <stop offset="0" stopColor="#999593" /><stop offset=".6" stopColor="#7d7977" /><stop offset="1" stopColor="#4c4a48" />
      </radialGradient>
    </defs>
    <rect x="111" y="15" width="3000" height="3000" fill="url(#sky)" />
    {gridLines.map((l, i) => (
      <path key={i} d={l.d} stroke={l.major ? "#5d7482" : "#6a818e"} strokeWidth={l.major ? 4 : 2.5} opacity={l.major ? 0.5 : 0.38} />
    ))}
    <g fontSize="34" fill="#9a6a70" opacity=".75">
      <text x="402" y="1060" fontSize="40" fontWeight="500" transform="rotate(-68 416 1044)">-5</text>
      <text x="540" y="690">0</text>
      <text x="645" y="435" fontSize="26">5</text>
      <text x="706" y="240" fontSize="26">10</text>
      <text x="765" y="80" fontSize="20">15</text>
    </g>
    <g fontSize="34" fill="#6573a0" opacity=".75">
      <text x="255" y="588">-5</text><text x="583" y="672">0</text><text x="943" y="768">5</text>
    </g>
    {dots.map(([x, y, r], i) => <circle key={i} cx={x} cy={y} r={r} fill="url(#ball)" />)}
    <path d="M940 152L771 450 775 467 745 480 747 431 758 441z" fill="#f00" />
    <g fill="none" strokeWidth="3"><path d="M165 1438l-12-38" stroke="#4ac24a" /><path d="M163 1400l10 10M173 1398l-10 14" stroke="#c66" /><path d="M165 1440h26" stroke="#77c" /></g>
  </svg>
);

const Viewport = styled.div`
  flex: 1; min-width: 0; position: relative; overflow: hidden; background: #69828f;
`;
const CameraMenus = styled.div`
  position: absolute; top: 4px; right: 4px; display: flex; gap: 5px;
`;
const Pill = styled.button<{ $w: number }>`
  width: ${p => p.$w}px; height: 16px; display: flex; align-items: center; justify-content: center; gap: 2px;
  border: 1px solid #b0bdc4; border-radius: 8px; background: #5b717d; color: #e4e8ea; font-size: 9px; line-height: 14px;
`;
const Hint = styled.p`
  position: absolute; left: 0; right: 0; bottom: 0; margin: 0; padding: 1px 5px 5px; height: 46px;
  background: rgba(255, 255, 255, 0.2); color: #1e2426; font-size: 9px; line-height: 13px; white-space: pre;
`;

const LeftPane = styled.section`
  min-width: 0; min-height: 0; display: flex; flex-direction: column; margin-left: 5px; border-right: 1px solid #111;
`;
const ViewRow = styled.div`flex: 1; min-height: 0; display: flex; padding-left: 1px;`;
const ToolColumn = styled.div<{ $w: number }>`
  flex: none; width: ${p => p.$w}px; display: flex; flex-direction: column; align-items: center; overflow: hidden; background: #383838;
`;
const ColumnScroll = styled.button<{ $right?: boolean }>`
  flex: none; width: 100%; height: 9px; padding: 0 2px; display: flex; align-items: center;
  justify-content: ${p => (p.$right ? "flex-end" : "flex-start")}; background: linear-gradient(#4a4a4a, #2c2c2c);
`;
const VSpace = styled.div<{ $h: number }>`flex: none; height: ${p => p.$h}px;`;
const Shelf = styled.div`
  flex: none; display: flex; flex-direction: column; border: 1px solid #1d1d1d; background: #404040;
`;
const Numbered = styled(IconButton)`
  position: relative; align-items: flex-start; justify-content: flex-end; overflow: visible;
`;
const NumberTag = styled.span`
  font-size: 9px; line-height: 16px; font-weight: 700; color: #e8e8e8; padding-right: 2px; position: relative; z-index: 1;
`;
const TagIcon = styled.span`position: absolute; left: 2px; bottom: 4px;`;
const ViewName = styled.span`font-size: 10px; font-weight: 700; color: #d4d4d4;`;

const leftTools = ["arrow", "lockSelect", "move", "rotate", "scale", "pose", "handles"];
const rightTools = ["gridPlane", "construction", "lock", "bulbOff", "headlight", "bulbGrey", "bulbPlus", "bulbShadow", "checkerCube", "eyeTick", "eyePlay"];

const SceneView = () => (
  <LeftPane aria-label="Scene view">
    <TabStrip>
      <Tab name="Scene View" w={62} active />
      <Tab name="Animatio..." w={63} />
      <Tab name="Render Vi..." w={62} />
      <Tab name="Composit..." w={66} />
      <Tab name="Motion F..." w={64} />
      <Gap $w={4} />
      <TabExtra aria-label="New tab"><PlusMark /></TabExtra>
      <TabExtra aria-label="Maximize pane"><Pane /></TabExtra>
      <TabExtra aria-label="Pane menu"><Caret size={7} fill="#ddd" /></TabExtra>
    </TabStrip>
    <Path>
      <Gap $w={8} />
      <Tool icon="cube" label="Object type" w={22} size={18} />
      <Tool icon="shapeSet" label="Display set" w={24} size={19} />
      <Tool icon="paper" label="Background" w={24} size={20} />
    </Path>
    <Bar $h={27}>
      <Gap $w={1} />
      <Grip label="Collapse toolbar" />
      <Gap $w={2} />
      <Tool icon="camera" label="View tool" w={22} size={20} />
      <ViewName>View</ViewName>
      <Spacer />
      <Tool icon="tumble" label="Tumble" w={30} size={19} />
      <Tool icon="pan" label="Pan" w={31} size={19} />
      <Tool icon="dolly" label="Dolly" w={29} size={19} />
      <Divider $vertical />
      <Gap $w={5} />
      <Tool icon="cameraMulti" label="Look at" w={21} h={22} on />
      <Gap $w={1} />
      <Tool icon="frame" label="Frame" w={24} size={17} />
      <Gap $w={2} />
      <Divider $vertical />
      <Tool icon="stop" label="Stop" w={31} size={19} />
      <Divider $vertical />
      <Gap $w={2} />
      <Tool icon="copter" label="Fly" w={24} size={19} />
      <Tool icon="gearBox" label="Display options" w={24} size={17} />
      <Gap $w={21} />
      <Tool icon="nodesBlue" label="Snapshots" w={24} size={18} />
      <Tool icon="help" label="Help" w={23} size={17} />
      <Gap $w={1} />
    </Bar>
    <ViewRow>
      <ToolColumn $w={31}>
        <ColumnScroll aria-label="Scroll left"><svg width="5" height="5" viewBox="0 0 6 6" aria-hidden="true"><path d="M6 0v6L0 3z" /></svg></ColumnScroll>
        <VSpace $h={3} />
        <Shelf>
          <Tool icon="coneSphere" label="Objects" w={23} h={23} size={20} />
          <Tool icon="quadSelect" label="Primitives" w={23} h={24} size={20} on />
          <Tool icon="yellowBox" label="Geometry" w={23} h={23} size={20} />
        </Shelf>
        <VSpace $h={5} />
        <Divider />
        <VSpace $h={14} />
        {leftTools.map(n => <Tool key={n} icon={n} label={n} w={26} h={27} size={20} on={n === "lockSelect"} />)}
        <Divider />
        {["magnetGrid", "magnetCurve", "magnetPoint", "magnet"].map(n => <Tool key={n} icon={n} label={n} w={26} h={27} size={21} />)}
        <Divider />
        <VSpace $h={4} />
        <Tool icon="cameraTop" label="View state" w={25} h={9} size={18} on />
        <VSpace $h={3} />
        <Caret size={8} />
        <Tool icon="films" label="Render region" w={26} h={26} size={19} />
        <Tool icon="reel" label="Flipbook" w={26} h={26} size={19} />
      </ToolColumn>
      <Viewport>
        <Scene />
        <CameraMenus>
          <Pill $w={42}>Persp<Caret size={5} fill="#e4e8ea" /></Pill>
          <Pill $w={49}>No cam<Caret size={5} fill="#e4e8ea" /></Pill>
        </CameraMenus>
        <Hint>{"Left mouse tumbles. Middle pans. Right dollies. Ctrl+Alt+Left box-zooms.\nCtrl+Right zooms. Spacebar-Ctrl-Left tilts. Hold L for alternate tumble,\ndolly, and zoom.    M or Alt+M for First Person Navigation."}</Hint>
      </Viewport>
      <ToolColumn $w={25}>
        <ColumnScroll aria-label="Scroll right" $right><svg width="5" height="5" viewBox="0 0 6 6" aria-hidden="true"><path d="M0 0v6l6-3z" /></svg></ColumnScroll>
        <VSpace $h={15} />
        {rightTools.map(n => <Tool key={n} icon={n} label={n} w={22} h={24} size={19} on={n === "gridPlane" || n === "bulbGrey" || n === "checkerCube"} />)}
        <Divider />
        <Tool icon="dot" label="Points" w={22} h={24} />
        <Tool icon="dotLine" label="Point normals" w={22} h={24} />
        <Tool icon="normal" label="Point trails" w={22} h={24} />
        <Numbered $w={22} $h={24}><NumberTag>12</NumberTag><TagIcon><svg width="6" height="6" viewBox="0 0 6 6" aria-hidden="true"><circle cx="3" cy="3" r="3" fill="#ddd" /></svg></TagIcon></Numbered>
        <Tool icon="primNormal" label="Primitive normals" w={22} h={24} />
        <Numbered $w={22} $h={24}><NumberTag>12</NumberTag><TagIcon><svg width="16" height="10" viewBox="2 8 20 13" aria-hidden="true">{quad}</svg></TagIcon></Numbered>
        <Tool icon="hull" label="Hulls" w={22} h={24} />
        <Tool icon="facet" label="Shading" w={22} h={14} on />
        <VSpace $h={4} />
        <Caret size={7} />
      </ToolColumn>
    </ViewRow>
  </LeftPane>
);

/* ---------- network editor ---------- */

const NetPane = styled.section`
  min-width: 0; min-height: 0; display: flex; flex-direction: column; border-left: 1px solid #111;
`;
const Canvas = styled.div`
  flex: 1; min-height: 0; position: relative; overflow: hidden; background: #303030;
`;
const Wires = styled.svg`position: absolute; inset: 0;`;
const NodeBox = styled.button<{ $x: number; $y: number }>`
  position: absolute; left: ${p => p.$x}px; top: ${p => p.$y}px;
`;
const labelKinds = {
  name: "font-size: 17px; color: #c6c6c6;",
  type: "font-size: 15px; color: #5f5f5f;",
  note: "font-size: 15px; color: #6c9cd6;",
  title: "font-size: 19px; font-weight: 700; color: #505050;",
};
const NodeLabel = styled.span<{ $x: number; $y: number; $kind: keyof typeof labelKinds }>`
  position: absolute; left: ${p => p.$x}px; top: ${p => p.$y}px; line-height: 22px; white-space: nowrap;
  ${p => labelKinds[p.$kind]}
`;

type NodeProps = { x: number; y: number; name: string; icon: string; skew?: boolean; selected?: boolean };
const GraphNode = ({ x, y, name, icon, skew, selected }: NodeProps) => {
  const stripe = skew ? [[19, 12], [31, 24], [67, 60], [79, 72]] : [[13, 10], [25, 22], [63, 60], [75, 72]];
  return (
    <NodeBox $x={x - 3} $y={y - 1} aria-label={name}>
      <svg width="91" height="29" viewBox="-3 -1 91 29" aria-hidden="true">
        {skew
          ? <path d="M7 0H84q5 0 3 4L82 22q-2 5-6 5H1q-4 0-3-5L3 4q2-4 4-4z" fill="#cdcdcd" />
          : <rect width="85" height="27" rx="4" fill={selected ? "#ffa519" : "#cdcdcd"} />}
        {selected && <path d="M76 1h5q3 0 3 3v19q0 3-3 3h-8z" fill="#02adf2" />}
        {stripe.map(([a, b]) => <path key={a} d={`M${a} 1L${b} 26`} stroke={selected ? "#9c6a18" : "#8b8b8b"} />)}
        {selected && <><rect x="-.5" y="-.5" width="86" height="28" rx="5" fill="none" stroke="#f2d024" strokeWidth="1.500" /><rect x="1" y="1" width="83" height="25" rx="3" fill="none" stroke="#3a2a08" /></>}
        <svg x="32" y="3" width="21" height="21" viewBox="0 0 24 24">{icons[icon]}</svg>
      </svg>
    </NodeBox>
  );
};
const LockBadge = styled.svg<{ $x: number; $y: number }>`
  position: absolute; left: ${p => p.$x}px; top: ${p => p.$y}px;
`;
const Lock = ({ x, y }: { x: number; y: number }) => (
  <LockBadge $x={x} $y={y} width="10" height="13" viewBox="0 0 10 13" aria-hidden="true">
    <path d="M2 6V4a3 3 0 0 1 6 0v2" fill="none" stroke="#67706d" strokeWidth="1.500" /><path d="M0 6h10v7H0z" fill="#67706d" />
  </LockBadge>
);

const ports = [[268, 111], [268, 147], [268, 186], [268, 222], [268, 261], [70, 224], [70, 264], [70, 300], [70, 340], [251, 298], [285, 298], [268, 337], [170, 364], [204, 364], [187, 404], [520, 412]];

/* ---------- parameter pane ---------- */

const ParmPane = styled.form`
  position: absolute; top: 0; right: 0; width: 389px; height: 378px; display: flex; flex-direction: column;
  background: #3a3a3a; overflow: hidden; font-size: 9px; color: #b8b8b8;
`;
const ParmHead = styled.header`
  flex: none; height: 27px; display: flex; align-items: center; padding: 0 1px 0 4px;
  border-bottom: 2px solid #2b2b2b; margin-left: 1px;
`;
const ParmTitle = styled.h2`margin: 0 2px 0 2px; font-size: 9px; font-weight: 700; white-space: nowrap; color: #c8c8c8;`;
const TextField = styled.input<{ $w?: number; $bold?: boolean; $off?: boolean }>`
  ${p => (p.$w ? `flex: none; width: ${p.$w}px;` : "flex: 1; min-width: 0;")}
  height: 18px; padding: 0 1px; font-family: ${MONO}; font-size: 10px; line-height: 16px;
  font-weight: ${p => (p.$bold ? 700 : 400)};
  color: ${p => (p.$off ? "#4c4c4c" : "#dedede")}; background: ${p => (p.$off ? "#343434" : "#131313")};
  border: 1px solid ${p => (p.$off ? "#303030" : "#1f1f1f")};
`;
const Row = styled.div<{ $h: number }>`
  flex: none; height: ${p => p.$h}px; display: flex; align-items: center;
`;
const ParmLabel = styled.label<{ $off?: boolean; $w?: number }>`
  flex: none; width: ${p => p.$w ?? 116}px; margin-right: 12px; text-align: right; white-space: nowrap;
  color: ${p => (p.$off ? "#6c6c6c" : "#b8b8b8")};
`;
const Button = styled.button<{ $w: number; $h?: number }>`
  flex: none; width: ${p => p.$w}px; height: ${p => p.$h ?? 18}px; display: flex; align-items: center; justify-content: center;
  background: linear-gradient(#525252, #444); border: 1px solid #2a2a2a; border-top-color: #5c5c5c; color: #c0c0c0;
`;
const MenuButton = styled(Button)`background: #404040; border-color: #2a2a2a;`;
const Check = styled.input.attrs({ type: "checkbox" })`
  appearance: none; flex: none; width: 11px; height: 11px; background: #141414; outline: 1px solid #2a2a2a;
  &:checked::before {
    content: ""; display: block; width: 11px; height: 11px; background: #ececec;
    clip-path: polygon(5% 52%, 28% 48%, 40% 66%, 82% 4%, 100% 10%, 50% 100%, 32% 100%);
  }
`;
const CheckLabel = styled.label`
  display: flex; align-items: center; gap: 6px; padding-left: 127px; white-space: nowrap; min-width: 0;
`;
const PickArrow = () => (
  <svg width="7" height="18" viewBox="0 0 7 18" aria-hidden="true"><path d="M0 1l9 8-9 8z" fill="#dcdeda" /></svg>
);
const RowButtons = styled.div`flex: none; display: flex; align-self: flex-start; margin-right: 18px;`;
const Word = styled.span<{ $w: number; $pad?: number }>`
  flex: none; width: ${p => p.$w}px; padding-left: ${p => p.$pad ?? 0}px; white-space: nowrap;
`;
const ScrollRow = styled.div`
  margin-top: auto; height: 11px; display: flex; padding: 0 1px 0 3px; background: #303030;
`;
const ScrollThumb = styled.div`
  flex: 1; display: flex; justify-content: center; align-items: center; background: linear-gradient(#505050, #404040);
`;
const ScrollTrack = styled.div`flex: none; width: 16px; background: #242424;`;
const ScrollStep = styled.button<{ $on?: boolean }>`
  flex: none; width: 15px; display: flex; align-items: center; justify-content: center;
  background: ${p => (p.$on ? "#4a4a4a" : "#363636")}; border-bottom: 1px solid ${p => (p.$on ? "#050505" : "#363636")};
`;

const attribRows = [
  { op: "Co...", bold: false, value: "*,^v" },
  { op: "Mu...", bold: true, value: "Alpha" },
  { op: "Ad...", bold: true, value: "v" },
];

const Parameters = () => (
  <ParmPane>
    <ParmHead>
      <Icon name="copyPoints" size={18} />
      <ParmTitle>Copy to Points</ParmTitle>
      <TextField aria-label="Node name" defaultValue="copytopoints4" />
      <Tool icon="gear" label="Settings" w={24} size={18} />
      <Tool icon="hda" label="Asset" w={23} size={18} />
      <Tool icon="search" label="Search" w={24} />
      <Tool icon="info" label="Info" w={23} size={17} />
      <Tool icon="help" label="Help" w={24} size={17} />
    </ParmHead>
    <Row $h={23}>
      <ParmLabel htmlFor="sg">Source Group</ParmLabel>
      <TextField id="sg" /><MenuButton type="button" $w={18} aria-label="Source group menu"><Caret size={6} /></MenuButton><Gap $w={8} /><PickArrow />
    </Row>
    <Row $h={23}>
      <ParmLabel as="span">Source Group Type</ParmLabel>
      <Combo label="Source Group Type" value="Guess from Group" w={109} h={19} pad={11} />
    </Row>
    <Row $h={23}>
      <ParmLabel htmlFor="tp">Target Points</ParmLabel>
      <TextField id="tp" /><MenuButton type="button" $w={18} aria-label="Target points menu"><Caret size={6} /></MenuButton><Gap $w={8} /><PickArrow />
    </Row>
    <Row $h={22}>
      <Gap $w={16} /><Check aria-label="Use piece attribute" />
      <ParmLabel $off $w={89} htmlFor="pa">Piece Attribute</ParmLabel>
      <TextField id="pa" $off defaultValue="variant" disabled /><Gap $w={9} />
    </Row>
    <Row $h={16}><CheckLabel><Check />Pack and Instance</CheckLabel></Row>
    <Row $h={17}><CheckLabel><Check defaultChecked />Transform Using Target Point Orientations</CheckLabel></Row>
    <Row $h={16}><CheckLabel><Check defaultChecked />Transform Using Implicit Target Point Normals If No Point...</CheckLabel></Row>
    <Row $h={21}><Gap $w={128} /><Button type="button" $w={145}>Reset Attributes from Target</Button></Row>
    <Row $h={22}>
      <ParmLabel htmlFor="at">Attributes from Target</ParmLabel>
      <TextField id="at" $w={87} $bold defaultValue="3" />
      <Button type="button" $w={14} aria-label="Add"><svg width="8" height="8" viewBox="0 0 8 8" aria-hidden="true"><path d="M4 0v8M0 4h8" stroke="#ddd" strokeWidth="1.500" /></svg></Button>
      <Button type="button" $w={14} aria-label="Remove"><svg width="7" height="2" viewBox="0 0 7 2" aria-hidden="true"><path d="M0 0h7v2H0z" fill="#ddd" /></svg></Button>
      <Gap $w={1} />
      <Button type="button" $w={50}>Clear</Button>
    </Row>
    <VSpace $h={4} />
    {attribRows.map(r => (
      <Row $h={21} key={r.op}>
        <Gap $w={19} />
        <RowButtons>
          <Button type="button" $w={15} $h={16} aria-label="Delete row"><svg width="7" height="7" viewBox="0 0 8 8" aria-hidden="true"><path d="M1 1l6 6M7 1L1 7" stroke="#c23b3b" strokeWidth="3" /><path d="M1 1l6 6M7 1L1 7" stroke="#fff" strokeWidth="1.500" /></svg></Button>
          <Button type="button" $w={15} $h={16} aria-label="Insert row"><svg width="8" height="10" viewBox="0 0 8 10" aria-hidden="true"><path d="M1 3l3-2 3 2" fill="none" stroke="#ccd6c4" /><path d="M4 4v5M1 6h6" stroke="#b9d6a4" strokeWidth="1.600" /></svg></Button>
        </RowButtons>
        <Check defaultChecked aria-label="Enable row" />
        <Gap $w={56} />
        <Word $w={45}>Apply to</Word>
        <Combo label="Apply to" value="Poi..." w={49} h={18} pad={11} />
        <Word $w={25} $pad={4}>by</Word>
        <Combo label="By" value={r.op} bold={r.bold} w={49} h={18} pad={11} />
        <Word $w={39} $pad={7}>Att...</Word>
        <TextField aria-label="Attributes" $w={28} $bold defaultValue={r.value} />
        <MenuButton type="button" $w={17} aria-label="Attribute menu"><Caret size={6} /></MenuButton>
      </Row>
    ))}
    <ScrollRow>
      <ScrollThumb><svg width="8" height="6" viewBox="0 0 8 6" aria-hidden="true"><path d="M0 1h8M0 3h8M0 5h8" stroke="#222" strokeDasharray="1 1" /></svg></ScrollThumb>
      <ScrollTrack />
      <ScrollStep type="button" aria-label="Scroll left"><svg width="5" height="5" viewBox="0 0 6 6" aria-hidden="true"><path d="M6 0v6L0 3z" fill="#555" /></svg></ScrollStep>
      <ScrollStep type="button" $on aria-label="Scroll right"><svg width="5" height="5" viewBox="0 0 6 6" aria-hidden="true"><path d="M0 0v6l6-3z" fill="#aaa" /></svg></ScrollStep>
    </ScrollRow>
  </ParmPane>
);

const NetworkEditor = () => (
  <NetPane aria-label="Network editor">
    <TabStrip>
      <Tab name="/obj/box1" w={65} active italic />
      <Tab name="Tree View" w={64} />
      <Tab name="Material Palette" w={84} />
      <Tab name="Asset Browser" w={79} />
      <Gap $w={2} />
      <TabExtra aria-label="New tab"><PlusMark /></TabExtra>
      <Spacer />
      <TabExtra aria-label="Maximize pane"><Pane /></TabExtra>
      <TabExtra aria-label="Pane menu"><Caret size={7} fill="#ddd" /></TabExtra>
    </TabStrip>
    <Path />
    <Bar $h={24}>
      <Gap $w={1} />
      <Grip label="Collapse toolbar" />
      <Gap $w={7} />
      <MenuNav $gap={11}>
        {["Add", "Edit", "Go", "View", "Tools", "Layout", "Labs", "Help"].map(m => <MenuItem key={m}>{m}</MenuItem>)}
      </MenuNav>
      <Spacer />
      <Tool icon="wrench" label="Tools" />
      <Tool icon="tree" label="Tree" w={23} />
      <Tool icon="list" label="List" size={16} />
      <Gap $w={13} />
      <Tool icon="palette" label="Colors" size={16} />
      <Tool icon="tableGrid" label="Shapes" size={17} />
      <Gap $w={13} />
      <Tool icon="windows" label="Network box" size={16} />
      <Tool icon="note" label="Sticky note" w={23} size={17} />
      <Tool icon="picture" label="Background image" w={25} />
      <Tool icon="crate" label="Asset" w={23} />
      <Gap $w={13} />
      <Tool icon="search" label="Find" />
      <Tool icon="eyeBox" label="Display options" w={23} size={17} />
    </Bar>
    <Canvas>
      <Wires width="100%" height="100%">
        <g fill="none" stroke="#4c6380" strokeWidth="1.300">
          <path d="M268 111V147M268 186V222M268 261L251 298M70 264V300" />
        </g>
        <circle cx="187" cy="384" r="42" fill="#47699b" />
        <circle cx="187" cy="384" r="29" fill="#9575cd" />
        <path d="M70 340Q74 351 83 352L158 351Q166 351 170 364" fill="none" stroke="#7d9a6c" />
        <path d="M268 337Q266 350 254 351H214Q208 352 204 364" fill="none" stroke="#8aa860" strokeDasharray="2 2" />
        {ports.map(([x, y]) => <circle key={`${x}-${y}`} cx={x} cy={y} r="4.300" fill="#b6b6b6" />)}
        <path d="M457 358q4-5 8 0l33 60q2 6-4 6h-66q-6 0-4-6z" fill="#ea5b62" />
        <path d="M456 371h11l-1 22h-9zM456 403h11v11h-11z" fill="#050505" />
      </Wires>
      <GraphNode x={226} y={78} name="grid5" icon="gridNode" />
      <GraphNode x={226} y={153} name="add_density_attrib" icon="attribNode" skew />
      <GraphNode x={226} y={228} name="paint_density_attrib" icon="paintNode" />
      <GraphNode x={28} y={231} name="sphere5" icon="sphereNode" />
      <GraphNode x={28} y={307} name="transform2" icon="transformNode" />
      <GraphNode x={226} y={304} name="scatteralign2" icon="scatterNode" />
      <GraphNode x={145} y={370} name="copytopoints4" icon="copyPointsLit" selected />
      <GraphNode x={478} y={379} name="attribpaint1" icon="paintNode" />
      <NodeLabel $kind="title" $x={406} $y={12}>Geometry</NodeLabel>
      <NodeLabel $kind="name" $x={318} $y={80}>grid5</NodeLabel>
      <NodeLabel $kind="type" $x={321} $y={136}>Attribute Create</NodeLabel>
      <NodeLabel $kind="name" $x={321} $y={155}>add_density_attrib</NodeLabel>
      <NodeLabel $kind="note" $x={321} $y={183}>density_attrib</NodeLabel>
      <NodeLabel $kind="type" $x={318} $y={211}>Attribute Paint</NodeLabel>
      <NodeLabel $kind="name" $x={318} $y={230}>paint_density_attrib</NodeLabel>
      <NodeLabel $kind="note" $x={318} $y={269}>density_attrib</NodeLabel>
      <NodeLabel $kind="name" $x={318} $y={306}>scatteralign2</NodeLabel>
      <NodeLabel $kind="name" $x={120} $y={232}>sphere5</NodeLabel>
      <NodeLabel $kind="name" $x={120} $y={308}>transform2</NodeLabel>
      <NodeLabel $kind="name" $x={238} $y={372}>copytopoints4</NodeLabel>
      <NodeLabel $kind="name" $x={570} $y={381}>attribpaint1</NodeLabel>
      <NodeLabel $kind="note" $x={570} $y={420}>mask</NodeLabel>
      <Lock x={323} y={254} />
      <Lock x={323} y={330} />
      <Lock x={575} y={405} />
      <Parameters />
    </Canvas>
  </NetPane>
);

/* ---------- play bar ---------- */

const PlayBar = styled.footer`
  flex: none; height: 58px; display: flex; background: #2f2f2f; border-top: 1px solid #5a5a5a;
`;
const PlayColumn = styled.div<{ $w?: number }>`
  ${p => (p.$w ? `flex: none; width: ${p.$w}px;` : "flex: 1; min-width: 0;")}
  display: flex; flex-direction: column;
`;
const PlayButton = styled.button<{ $w: number; $h: number; $on?: boolean; $off?: boolean }>`
  flex: none; width: ${p => p.$w}px; height: ${p => p.$h}px; display: flex; align-items: center; justify-content: center;
  background: ${p => (p.$on ? "#5f7d9c" : p.$off ? "#333" : "linear-gradient(#4e4e4e, #3c3c3c)")}; border: 1px solid #1e1e1e;
`;
const FrameField = styled.input<{ $w: number; $h: number; $dim?: boolean }>`
  flex: none; width: ${p => p.$w}px; height: ${p => p.$h}px; padding: 0 1px; font-family: ${MONO}; font-size: 10px;
  color: #dedede; background: ${p => (p.$dim ? "#262626" : "#121212")}; border: 1px solid #202020;
`;
const Ruler = styled.div`height: 30px; position: relative; overflow: hidden;`;
const Playhead = styled.div`
  position: absolute; left: 0; top: 2px; width: 20px; height: 14px; border: 1px solid #ddd; background: #000;
  font-family: ${MONO}; font-size: 11px; line-height: 13px; text-align: center; color: #f0f0f0;
`;
const RangeRow = styled.div`height: 22px; margin-top: 4px; display: flex; align-items: center; gap: 2px;`;
const RangeTrack = styled.div`
  flex: 1; height: 3px; background: #7a7a7a; display: flex; align-items: center; justify-content: space-between;
`;
const KeyArea = styled.div`flex: none; width: 52px; display: flex; align-items: center; padding-left: 3px;`;
const KeyButton = styled.button`
  width: 32px; height: 32px; border-radius: 50%; background: #3b3b3b; border: 1px solid #2a2a2a;
  display: flex; align-items: center; justify-content: center;
`;
const StatusButton = styled(Button)`
  justify-content: space-between; padding: 0 4px 0 14px; font-size: 9px;
`;
const Fill = styled.div<{ $gap: number }>`display: flex; align-items: center; gap: ${p => p.$gap}px;`;

const frames = Array.from({ length: 40 }, (_, i) => (i + 1) * 6);

const Timeline = () => (
  <Ruler>
    <svg width="100%" height="30" aria-hidden="true">
      <line x1="0" y1="18.500" x2="100%" y2="18.500" stroke="#9a9a9a" />
      {frames.map(f => {
        const x = `${((f - 1) / 240) * 100}%`;
        const major = f % 24 === 0;
        return (
          <React.Fragment key={f}>
            <line x1={x} x2={x} y1={major ? 12 : 15} y2={major ? 25 : 22} stroke={major ? "#b0b0b0" : "#8a8a8a"} />
            {major && <text x={x} y="8" fill="#9a9a9a" fontSize="8">{f}</text>}
          </React.Fragment>
        );
      })}
      <path d="M0 19l5-4H0z" fill="#ddd" />
    </svg>
    <Playhead>1</Playhead>
  </Ruler>
);

const Playback = () => (
  <PlayBar>
    <Grip label="Collapse play bar" end />
    <Gap $w={3} />
    <PlayColumn $w={183}>
      <VSpace $h={6} />
      <Fill $gap={0}>
        {["toStart", "playBack", "stopPlay", "play", "toEnd"].map(n => (
          <PlayButton key={n} $w={23} $h={23} $on={n === "stopPlay"} aria-label={n}><Icon name={n} size={18} /></PlayButton>
        ))}
        <Gap $w={2} />
        <FrameField $w={38} $h={23} aria-label="Current frame" defaultValue="1" />
        <Gap $w={1} />
        <PlayButton $w={11} $h={23} aria-label="Previous key"><svg width="8" height="8" viewBox="0 0 8 8" aria-hidden="true"><path d="M4 0v8L0 4zM6 0h1v8H6z" fill="#ddd" /></svg></PlayButton>
        <PlayButton $w={11} $h={23} aria-label="Next key"><svg width="8" height="8" viewBox="0 0 8 8" aria-hidden="true"><path d="M4 0v8l4-4zM1 0h1v8H1z" fill="#ddd" /></svg></PlayButton>
      </Fill>
      <VSpace $h={6} />
      <Fill $gap={0}>
        {["menuPage", "speaker", "loop", "clock"].map(n => (
          <PlayButton key={n} $w={23} $h={20} aria-label={n}><Icon name={n} size={17} /></PlayButton>
        ))}
        <Gap $w={2} />
        <PlayButton $w={20} $h={20} $off aria-label="First key"><svg width="8" height="8" viewBox="0 0 8 8" aria-hidden="true"><path d="M7 0v8L3 4z" fill="#5f5f5f" /><path d="M0 0h2v8H0z" fill="#33502a" /></svg></PlayButton>
        <PlayButton $w={20} $h={20} $off aria-label="Last key"><svg width="8" height="8" viewBox="0 0 8 8" aria-hidden="true"><path d="M1 0v8l4-4z" fill="#5f5f5f" /><path d="M6 0h2v8H6z" fill="#33502a" /></svg></PlayButton>
      </Fill>
    </PlayColumn>
    <PlayColumn>
      <Timeline />
      <RangeRow>
        <FrameField $w={35} $h={20} $dim aria-label="Global start" defaultValue="1" />
        <FrameField $w={35} $h={20} aria-label="Range start" defaultValue="1" />
        <RangeTrack>
          <svg width="5" height="11" viewBox="0 0 5 11" aria-hidden="true"><path d="M0 0l5 5.500L0 11z" fill="#b4b4b4" /></svg>
          <svg width="5" height="11" viewBox="0 0 5 11" aria-hidden="true"><path d="M5 0L0 5.500 5 11z" fill="#b4b4b4" /></svg>
        </RangeTrack>
        <FrameField $w={34} $h={20} aria-label="Range end" defaultValue="240" />
        <FrameField $w={35} $h={20} $dim aria-label="Global end" defaultValue="240" />
      </RangeRow>
    </PlayColumn>
    <KeyArea>
      <KeyButton aria-label="Set key"><Icon name="key" size={17} /></KeyButton>
      <Button $w={13} aria-label="Key menu"><Caret size={6} /></Button>
    </KeyArea>
    <PlayColumn $w={155}>
      <VSpace $h={6} />
      <Fill $gap={2}>
        <PlayButton $w={21} $h={20} aria-label="Channel list"><Icon name="channelList" size={15} /></PlayButton>
        <StatusButton $w={129} $h={20}>0 keys, 0/0 channels<svg width="6" height="6" viewBox="0 0 6 6" aria-hidden="true"><path d="M0 6h6L3 0z" fill="#8c8c8c" /></svg></StatusButton>
      </Fill>
      <VSpace $h={4} />
      <Fill $gap={2}>
        <PlayButton $w={21} $h={20} aria-label="Animation editor"><Icon name="curves" size={15} /></PlayButton>
        <Combo label="Key scope" value="Key All Channels" w={129} h={19} pad={10} />
      </Fill>
    </PlayColumn>
  </PlayBar>
);

/* ---------- application ---------- */

const PaneGrid = styled.main`
  flex: 1; min-height: 0; display: grid; grid-template-columns: minmax(0, 377fr) 3px minmax(0, 900fr);
  grid-template-rows: minmax(0, 1fr);
`;
const Splitter = styled.div`background: #474747;`;
const ShelfToggle = styled.button`
  flex: none; width: 100%; height: 8px; display: flex; align-items: center; padding-left: 2px;
  background: linear-gradient(#4a4a4a, #3c3c3c);
`;

export default function App() {
  return (
    <>
      <GlobalStyle />
      <Shell>
        <Bar as="header" $h={21}>
          <Grip label="Collapse menu" />
          <Gap $w={5} />
          <MenuNav $gap={7}>
            {["File", "Edit", "Render", "Assets", "Windows", "Help"].map(m => <MenuItem key={m}>{m}</MenuItem>)}
          </MenuNav>
          <Gap $w={18} />
          <Combo label="Desktop" value="LG_Clean" w={108} h={20} pad={3} icon="layout" end={17} size={10} />
          <Gap $w={2} />
          <Combo label="Radial menu" value="Main" w={108} h={20} pad={3} icon="target" end={17} size={10} />
          <Spacer />
          <Combo label="Take" value="Main" w={142} h={20} pad={3} icon="clapperDark" end={15} size={10} />
          <Tool icon="help" label="Help" w={27} h={20} size={13} />
        </Bar>
        <ShelfToggle aria-label="Show shelf"><Caret size={5} fill="#050505" /></ShelfToggle>
        <PaneGrid>
          <SceneView />
          <Splitter />
          <NetworkEditor />
        </PaneGrid>
        <Playback />
      </Shell>
    </>
  );
}
